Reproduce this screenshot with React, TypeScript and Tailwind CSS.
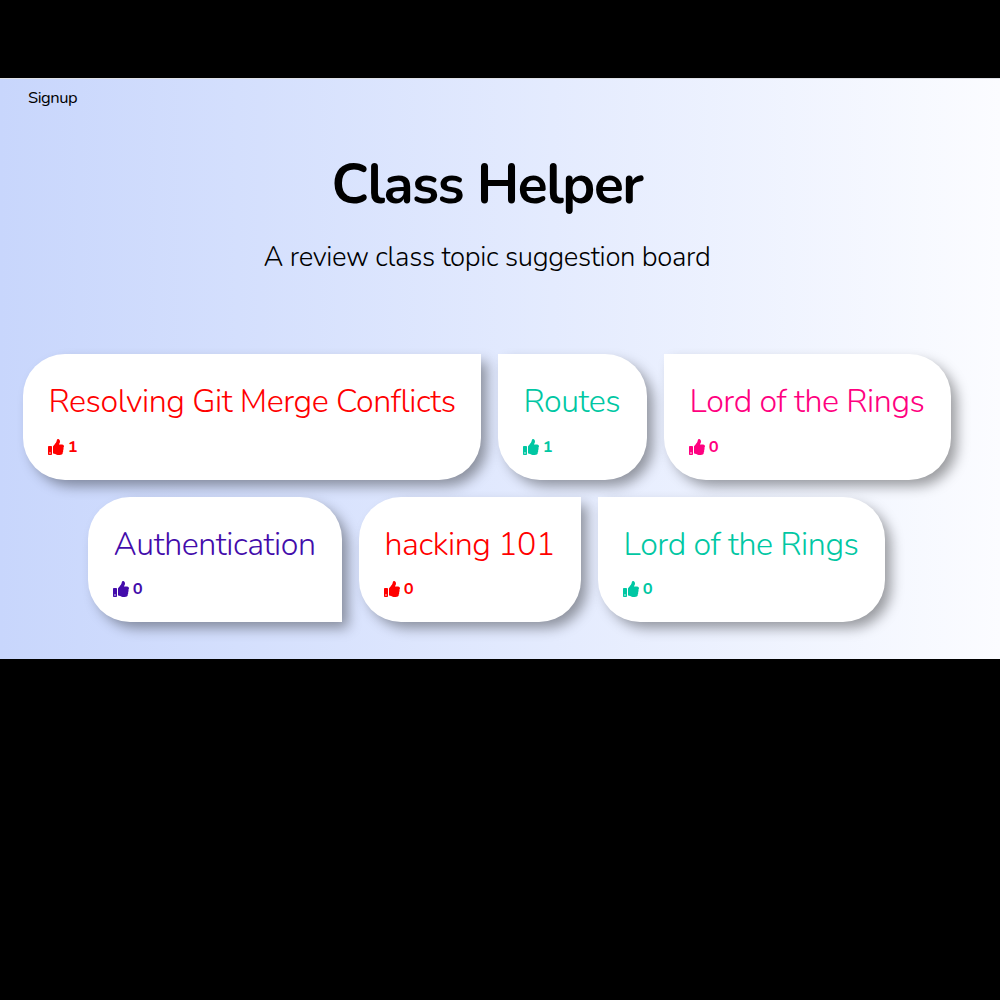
import { FaThumbsUp } from 'react-icons/fa';

type Topic = { title: string; votes: number; style: string };

const rows: Topic[][] = [
  [
    { title: 'Resolving Git Merge Conflicts', votes: 1, style: 'w-[458px] text-[#ff0000] rounded-tr-none' },
    { title: 'Routes', votes: 1, style: 'w-[149px] text-[#00c7a3] rounded-tl-none' },
    { title: 'Lord of the Rings', votes: 0, style: 'w-[287px] text-[#ff0080] rounded-tl-none' },
  ],
  [
    { title: 'Authentication', votes: 0, style: 'w-[254px] text-[#430cab] rounded-br-none' },
    { title: 'hacking 101', votes: 0, style: 'w-[222px] text-[#ff0000] rounded-tr-none' },
    { title: 'Lord of the Rings', votes: 0, style: 'w-[287px] text-[#00c7a3] rounded-tl-none' },
  ],
];

function TopicCard({ title, votes, style }: Topic) {
  return (
    <article
      className={`h-[125.5px] rounded-[42px] bg-white pl-[25.5px] pt-[25px] shadow-[7px_7px_13px_-1px_rgba(0,0,0,0.38)] ${style}`}
    >
      <h2 className="whitespace-nowrap text-[32.2px] font-[320] leading-[44px] tracking-[-0.43px]">{title}</h2>
      <div className="mt-[12.5px] flex items-center gap-[4px] text-[16.5px] font-bold leading-[22px]">
        <FaThumbsUp className="-ml-[0.7px] size-[16px]" />
        <span>{votes}</span>
      </div>
    </article>
  );
}

export default function App() {
  return (
    <div className="h-[1000px] w-[1000px] overflow-hidden bg-black pt-[78px] font-['Nunito','Open_Sans',sans-serif] text-black">
      <main className="h-[581px] overflow-hidden border-t border-[#dfe1e6] bg-linear-to-r from-[#c8d6fc] to-[#fbfcff]">
        <nav className="h-[74px] pl-[28px] pt-[8px] text-[16.5px] font-normal leading-[22px] tracking-[-0.45px]">Signup</nav>
        <header className="w-[974px] text-center">
          <h1 className="h-[85px] text-[55px] font-bold leading-[63px] tracking-[-1.4px]">Class Helper</h1>
          <p className="text-[27.5px] font-[340] leading-[38px] tracking-[-0.33px]">A review class topic suggestion board</p>
        </header>
        <section className="mt-[78px] flex w-[974px] flex-col gap-[17px]">
          {rows.map((row, i) => (
            <div key={i} className="flex justify-center gap-[17px] even:pr-[1px]">
              {row.map((topic, j) => (
                <TopicCard key={j} {...topic} />
              ))}
            </div>
          ))}
        </section>
      </main>
    </div>
  );
}
